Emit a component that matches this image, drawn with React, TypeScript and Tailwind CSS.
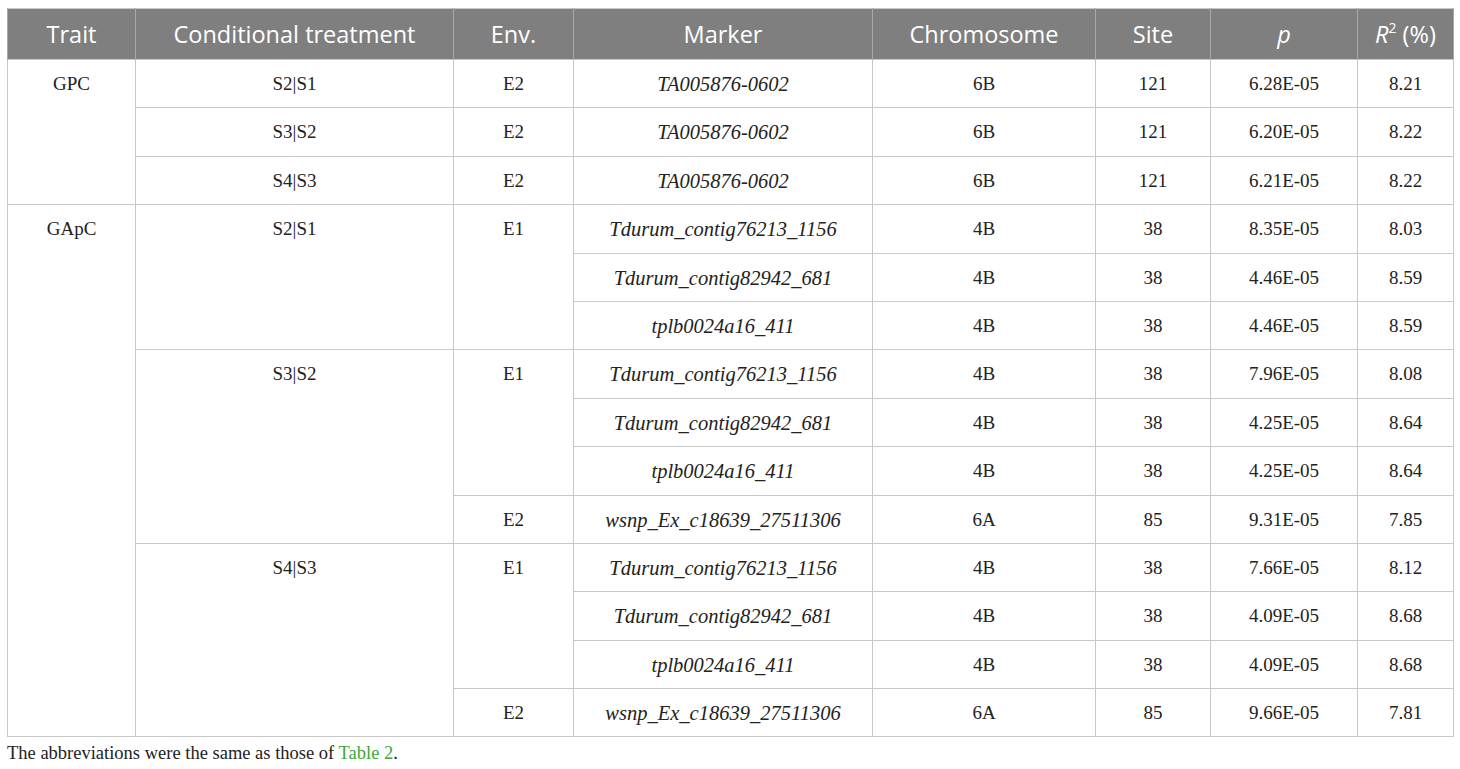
type Row = {
  trait?: { text: string; span: number };
  cond?: { text: string; span: number };
  env?: { text: string; span: number };
  marker: string;
  chr: string;
  site: string;
  p: string;
  r2: string;
};

const rows: Row[] = [
  { trait: { text: "GPC", span: 3 }, cond: { text: "S2|S1", span: 1 }, env: { text: "E2", span: 1 }, marker: "TA005876-0602", chr: "6B", site: "121", p: "6.28E-05", r2: "8.21" },
  { cond: { text: "S3|S2", span: 1 }, env: { text: "E2", span: 1 }, marker: "TA005876-0602", chr: "6B", site: "121", p: "6.20E-05", r2: "8.22" },
  { cond: { text: "S4|S3", span: 1 }, env: { text: "E2", span: 1 }, marker: "TA005876-0602", chr: "6B", site: "121", p: "6.21E-05", r2: "8.22" },
  { trait: { text: "GApC", span: 11 }, cond: { text: "S2|S1", span: 3 }, env: { text: "E1", span: 3 }, marker: "Tdurum_contig76213_1156", chr: "4B", site: "38", p: "8.35E-05", r2: "8.03" },
  { marker: "Tdurum_contig82942_681", chr: "4B", site: "38", p: "4.46E-05", r2: "8.59" },
  { marker: "tplb0024a16_411", chr: "4B", site: "38", p: "4.46E-05", r2: "8.59" },
  { cond: { text: "S3|S2", span: 4 }, env: { text: "E1", span: 3 }, marker: "Tdurum_contig76213_1156", chr: "4B", site: "38", p: "7.96E-05", r2: "8.08" },
  { marker: "Tdurum_contig82942_681", chr: "4B", site: "38", p: "4.25E-05", r2: "8.64" },
  { marker: "tplb0024a16_411", chr: "4B", site: "38", p: "4.25E-05", r2: "8.64" },
  { env: { text: "E2", span: 1 }, marker: "wsnp_Ex_c18639_27511306", chr: "6A", site: "85", p: "9.31E-05", r2: "7.85" },
  { cond: { text: "S4|S3", span: 4 }, env: { text: "E1", span: 3 }, marker: "Tdurum_contig76213_1156", chr: "4B", site: "38", p: "7.66E-05", r2: "8.12" },
  { marker: "Tdurum_contig82942_681", chr: "4B", site: "38", p: "4.09E-05", r2: "8.68" },
  { marker: "tplb0024a16_411", chr: "4B", site: "38", p: "4.09E-05", r2: "8.68" },
  { env: { text: "E2", span: 1 }, marker: "wsnp_Ex_c18639_27511306", chr: "6A", site: "85", p: "9.66E-05", r2: "7.81" },
];

const td = "border border-[#c8c8c8] align-top text-center pt-[12px] pb-0 px-2";
const th = "border-x border-[#a8a8a8] font-normal text-center";

export default function App() {
  return (
    <div className="bg-white min-h-[769px] w-[1460px] pt-[8px] pl-[7px] text-[#222]">
      <table
        className="border-collapse table-fixed w-[1446px] border border-[#c8c8c8] text-[19px] leading-[24px]"
        style={{ fontFamily: '"Liberation Serif", "Times New Roman", serif' }}
      >
        <colgroup>
          <col className="w-[128px]" />
          <col className="w-[318px]" />
          <col className="w-[120px]" />
          <col className="w-[299px]" />
          <col className="w-[223px]" />
          <col className="w-[115px]" />
          <col className="w-[147px]" />
          <col className="w-[96px]" />
        </colgroup>
        <thead>
          <tr
            className="bg-[#7f7f7f] text-white h-[51px] text-[23.5px]"
            style={{ fontFamily: '"Open Sans", "Noto Sans", sans-serif' }}
          >
            <th className={th}>Trait</th>
            <th className={th}>Conditional treatment</th>
            <th className={th}>Env.</th>
            <th className={th}>Marker</th>
            <th className={th}>Chromosome</th>
            <th className={th}>Site</th>
            <th className={th}>
              <i>p</i>
            </th>
            <th className={th}>
              <i>R</i>
              <sup className="text-[14px] relative -top-[10px]">2</sup> (%)
            </th>
          </tr>
        </thead>
        <tbody>
          {rows.map((r, i) => (
            <tr key={i} className="h-[48.4px]">
              {r.trait && (
                <td rowSpan={r.trait.span} className={td}>
                  {r.trait.text}
                </td>
              )}
              {r.cond && (
                <td rowSpan={r.cond.span} className={td}>
                  {r.cond.text}
                </td>
              )}
              {r.env && (
                <td rowSpan={r.env.span} className={td}>
                  {r.env.text}
                </td>
              )}
              <td className={td}>
                <i className="text-[20.5px]">{r.marker}</i>
              </td>
              <td className={td}>{r.chr}</td>
              <td className={td}>{r.site}</td>
              <td className={td}>{r.p}</td>
              <td className={td}>{r.r2}</td>
            </tr>
          ))}
        </tbody>
      </table>
      <p
        className="mt-[4px] text-[18.5px] leading-[24px]"
        style={{ fontFamily: '"Liberation Serif", "Times New Roman", serif' }}
      >
        The abbreviations were the same as those of{" "}
        <span className="text-[#3ca83c]">Table 2</span>.
      </p>
    </div>
  );
}
